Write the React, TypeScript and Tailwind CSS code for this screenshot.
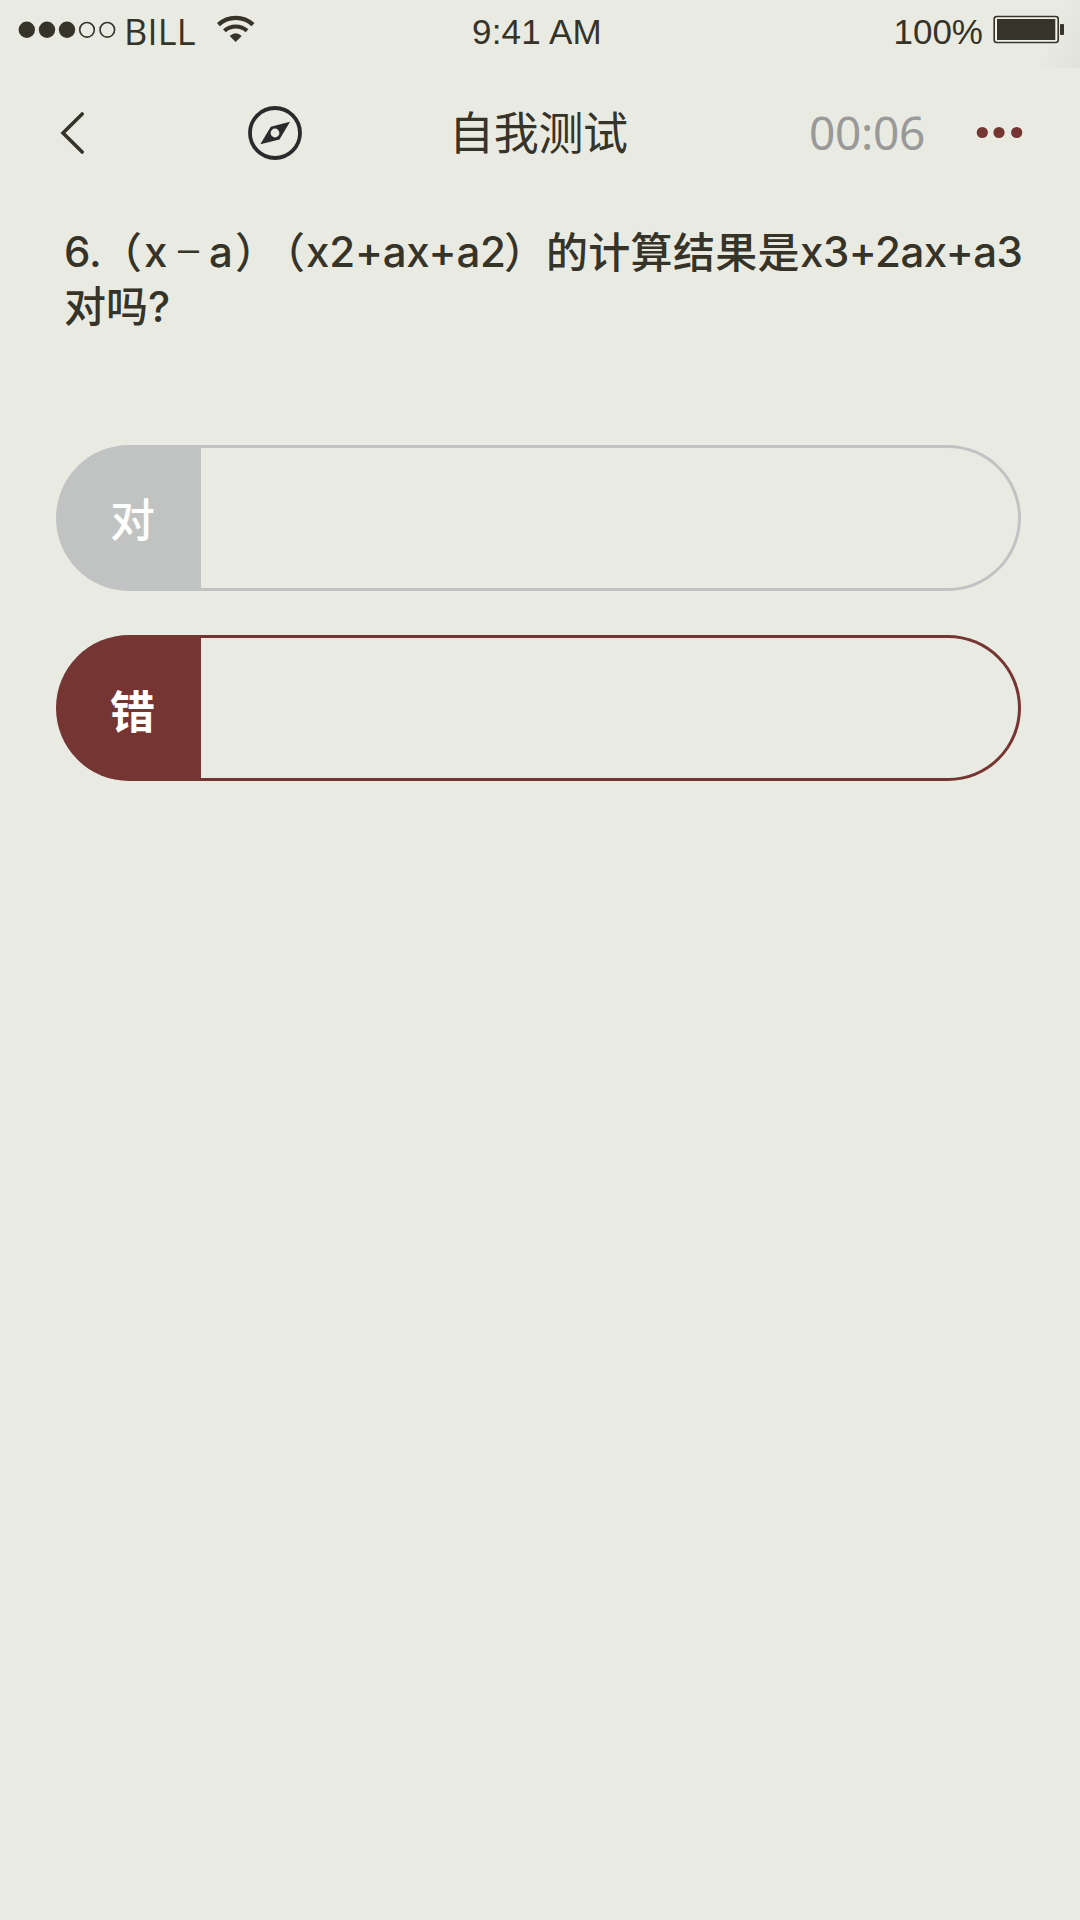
import React from "react";

const sans = "font-['Liberation_Sans',sans-serif]";

function StatusBar() {
  return (
    <div className="flex h-[68px] items-start bg-[linear-gradient(115deg,transparent_96%,#e0e1da_100%)] pl-[18px] pr-[15px]">
      <div className="flex w-[434px] shrink-0">
        <svg className="mt-[21px] h-[18px] w-[99px] shrink-0" viewBox="0 0 99 18" fill="#363329">
          <circle cx="8.8" cy="8.8" r="8.2" />
          <circle cx="29" cy="8.8" r="8.2" />
          <circle cx="49" cy="8.8" r="8.2" />
          <circle cx="69" cy="8.8" r="7.3" fill="none" stroke="#363329" strokeWidth="1.6" />
          <circle cx="89.3" cy="8.8" r="7.3" fill="none" stroke="#363329" strokeWidth="1.6" />
        </svg>
        <span className="ml-[7px] mt-[7px] w-[75px] text-[36px] leading-[50px] tracking-[0.2px] font-['Open_Sans',sans-serif]">BILL</span>
        <svg className="ml-[18px] mt-[15px] h-[28px] w-[38px] shrink-0" viewBox="0 0 38 28" fill="none" stroke="#363329">
          <path d="M1.4 9.6A25.5 25.5 0 0 1 36 9.6" strokeWidth="4.4" />
          <path d="M7.4 15.8A17 17 0 0 1 30 15.8" strokeWidth="4.2" />
          <path d="M12.7 21Q18.7 15.3 24.7 21L18.7 27Z" fill="#363329" stroke="none" />
        </svg>
      </div>
      <span className={`ml-[20px] mt-[12px] w-[200px] text-[35px] leading-[40px] tracking-[0.2px] ${sans}`}>9:41 AM</span>
      <span className={`ml-auto mt-[12px] text-[35px] leading-[40px] ${sans}`}>100%</span>
      <svg className="ml-[10px] mt-[15px] h-[29px] w-[72px] shrink-0" viewBox="0 0 72 29">
        <rect x="1.2" y="1.5" width="64" height="26" rx="2.5" fill="#f1f2ea" stroke="#363329" strokeWidth="1.6" />
        <rect x="4" y="4" width="58.3" height="21" fill="#363329" />
        <rect x="67" y="9" width="4" height="11" rx="1" fill="#363329" />
      </svg>
    </div>
  );
}

function Header() {
  return (
    <header className="flex h-[130px] items-start pl-[60px] pr-[57px]">
      <svg className="mt-[43px] h-[44px] w-[26px] shrink-0" viewBox="0 0 26 44" fill="none" stroke="#363329" strokeWidth="3.6" strokeLinecap="round">
        <path d="M22.2 3L3 22L22.2 41" />
      </svg>
      <svg className="ml-[162px] mt-[38px] h-[54px] w-[54px] shrink-0" viewBox="0 0 54 54">
        <circle cx="27" cy="27" r="25" fill="none" stroke="#292a2c" strokeWidth="3.8" />
        <path fillRule="evenodd" fill="#292a2c" d="M42 15.8L31.5 33.4L12.3 38.3L22.8 20.8ZM27 22.6A4.4 4.4 0 1 0 27 31.4A4.4 4.4 0 1 0 27 22.6Z" />
      </svg>
      <h1 className="ml-[147px] mt-[31px] w-[181px] whitespace-nowrap text-[45px] font-normal leading-[64px] tracking-[-0.3px] font-['Noto_Sans_CJK_SC',sans-serif]">自我测试</h1>
      <span className="ml-[179px] mt-[32px] whitespace-nowrap text-[46px] leading-[64px] tracking-[-0.3px] text-[#999] font-['Noto_Sans',sans-serif]">00:06</span>
      <svg className="ml-auto mt-[58px] h-[14px] w-[48px] shrink-0" viewBox="0 0 48 14" fill="#753533">
        <circle cx="7.3" cy="6.5" r="5.6" />
        <circle cx="24" cy="6.5" r="5.6" />
        <circle cx="41.7" cy="6.5" r="5.6" />
      </svg>
    </header>
  );
}

function Question() {
  return (
    <div className="ml-[64px] mt-[28px] text-[42px] font-medium leading-[54px] font-['Inter','Noto_Sans_CJK_SC',sans-serif]">
      <p className="flex whitespace-nowrap">
        <span className="-mt-px w-[36px] font-[450]">6.</span>
        <span className="flex w-[44px] justify-end pr-[2px] [font-feature-settings:'halt']">（</span>
        <span className="-mt-px w-[34px] font-[450]">x</span>
        <span className="-mt-[3px] w-[31px] font-light">–</span>
        <span className="-mt-px w-[26px] font-[450]">a</span>
        <span className="w-[28px] [font-feature-settings:'halt']">）</span>
        <span className="flex w-[43px] justify-end pr-px [font-feature-settings:'halt']">（</span>
        <span className="-mt-px w-[198px] font-[450] tracking-[-0.2px]">x2+ax+a2</span>
        <span className="w-[42px] [font-feature-settings:'halt']">）</span>
        <span className="w-[254px] tracking-[0.3px]">的计算结果是</span>
        <span className="-mt-px font-[450] tracking-[-0.5px]">x3+2ax+a3</span>
      </p>
      <p>对吗<span className="font-[450]">?</span></p>
    </div>
  );
}

function Option({ label, tone }: { label: string; tone: "gray" | "red" }) {
  const gray = tone === "gray";
  return (
    <button
      type="button"
      className={`flex h-[146px] w-[965px] rounded-full py-[3px] pr-[3px] ${gray ? "bg-[#c1c3c2]" : "bg-[#753533]"}`}
    >
      <span
        className={`flex h-full w-[145px] items-center pl-[54px] text-[45px] text-white font-['Noto_Sans_CJK_SC',sans-serif] ${
          gray ? "font-medium" : "pt-[4px] font-bold"
        }`}
      >
        {label}
      </span>
      <span className="h-full flex-1 rounded-r-full bg-[#e9ebe2]" />
    </button>
  );
}

export default function App() {
  return (
    <main className="flex h-[1920px] w-[1080px] flex-col overflow-hidden bg-[#e9ebe2] text-[#363329]">
      <StatusBar />
      <Header />
      <Question />
      <div className="ml-[56px] mt-[111px] flex flex-col gap-[44px]">
        <Option label="对" tone="gray" />
        <Option label="错" tone="red" />
      </div>
    </main>
  );
}
